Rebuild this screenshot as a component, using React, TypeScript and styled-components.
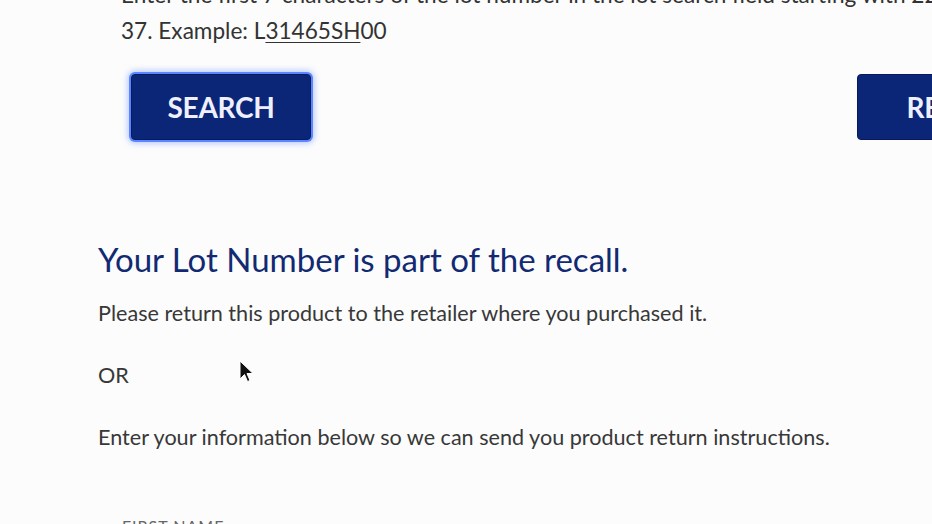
import React from "react";
import styled, { createGlobalStyle } from "styled-components";

const Global = createGlobalStyle`
  html, body { margin: 0; padding: 0; background: #fcfcfc; }
  body { font-family: Lato, "Open Sans", sans-serif; overflow: hidden; }
`;

const Page = styled.div`
  position: relative;
  width: 932px;
  height: 524px;
  overflow: hidden;
  padding-left: 98px;
  box-sizing: border-box;
`;

const SearchBlock = styled.section`
  padding-left: 23px;
  margin-top: -23px;
`;

const Instructions = styled.p`
  margin: 0;
  font-size: 22.6px;
  line-height: 36px;
  color: #333;
  white-space: nowrap;
`;

const Code = styled.span`
  text-decoration: underline;
  text-underline-offset: 3px;
  text-decoration-thickness: 1px;
`;

const ButtonRow = styled.div`
  display: flex;
  gap: 546px;
  margin-top: 25px;
  padding-left: 10px;
`;

const NavyButton = styled.button<{ $focused?: boolean }>`
  flex: none;
  width: 180px;
  height: 66px;
  border: 1px solid #071a5e;
  border-radius: 4px;
  background: #0b2677;
  color: #eef0ff;
  font-family: Lato, "Open Sans", sans-serif;
  font-weight: 700;
  font-size: 28px;
  letter-spacing: -0.3px;
  text-transform: uppercase;
  box-shadow: ${(p) => (p.$focused ? "0 0 0 2px #5a86ff, 0 0 6px 3px rgba(100,140,255,0.5)" : "none")};
  padding: 0;
  text-align: center;
`;

const ResultBlock = styled.section`
  margin-top: 99px;
`;

const Heading = styled.h2`
  margin: 0;
  font-weight: 400;
  font-size: 33px;
  line-height: 40px;
  color: #112a72;
`;

const Body = styled.p`
  margin: 0;
  font-size: 21.6px;
  line-height: 28px;
  color: #383838;
`;

const Stack = styled.div`
  display: flex;
  flex-direction: column;
  gap: 34px;
  margin-top: 20px;
`;

const FieldLabel = styled.div`
  margin-top: 65px;
  padding-left: 24px;
  font-size: 16px;
  letter-spacing: 1px;
  color: #666;
  text-transform: uppercase;
`;

const Cursor = styled.svg`
  position: absolute;
  left: 238px;
  top: 360px;
  width: 16px;
  height: 24px;
`;

export default function App() {
  return (
    <>
      <Global />
      <Page>
        <SearchBlock>
          <Instructions>
            Enter the first 7 characters of the lot number in the lot search field starting with 22 thru
            <br />
            37. Example: L<Code>31465SH</Code>00
          </Instructions>
          <ButtonRow>
            <NavyButton $focused>Search</NavyButton>
            <NavyButton>Reset</NavyButton>
          </ButtonRow>
        </SearchBlock>
        <ResultBlock>
          <Heading>Your Lot Number is part of the recall.</Heading>
          <Stack>
            <Body>Please return this product to the retailer where you purchased it.</Body>
            <Body>OR</Body>
            <Body>Enter your information below so we can send you product return instructions.</Body>
          </Stack>
          <FieldLabel>First Name</FieldLabel>
        </ResultBlock>
        <Cursor viewBox="0 0 16 24">
          <path d="M2 1 L2 19 L6.5 14.5 L9.5 21.5 L12 20.5 L9 13.5 L15 13.5 Z" fill="#111" stroke="#fff" strokeWidth="1" />
        </Cursor>
      </Page>
    </>
  );
}
